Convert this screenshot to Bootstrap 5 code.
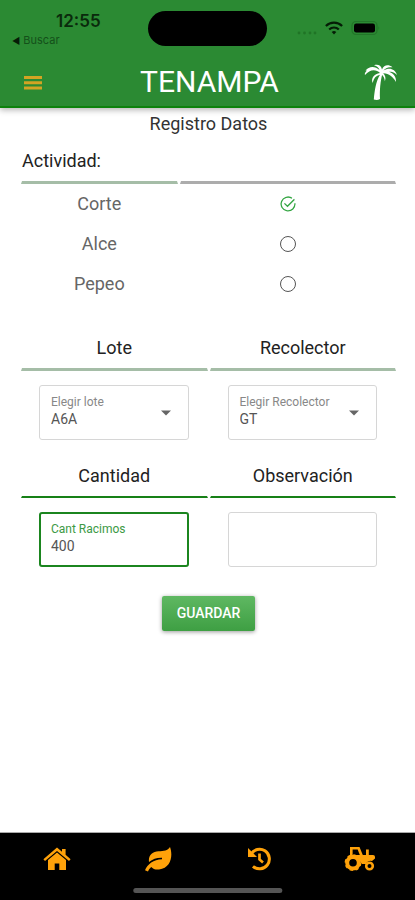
<!DOCTYPE html>
<html lang="es">
<head>
<meta charset="utf-8">
<meta name="viewport" content="width=device-width, initial-scale=1">
<title>Tenampa - Registro Datos</title>
<link href="https://cdn.jsdelivr.net/npm/bootstrap@5.3.0/dist/css/bootstrap.min.css" rel="stylesheet">
<style>
  body { font-family: Roboto, "Liberation Sans", sans-serif; color: #333; background: #fff; }
  .app-top { background: #2b8a33; border-bottom: 2px solid #0c820c; box-shadow: 0 2px 6px rgba(0,0,0,.3); }
  .status { height: 58px; padding-top: 11px; }
  .status-side { width: 148px; }
  .clock { font: 600 17px/20px Inter, sans-serif; color: #0a2a0c; padding-left: 56px; }
  .back-link { font: 400 11px/18px Inter, sans-serif; color: #14501a; padding-left: 12px; }
  .back-link span { color: #061c07; font-size: 9px; }
  .island { height: 35px; background: #000; }
  .status-icons { padding: 8px 35px 0 0; gap: 8px; }
  .bar { height: 48px; padding: 0 16px 0 20px; }
  .brand { font-size: 30px; line-height: 36px; color: #fff; font-weight: 400; }
  .bar-side { width: 36px; }
  .page-title { font-size: 18px; line-height: 24px; font-weight: 400; padding-top: 4px; }
  main { padding: 0 17px 0 19px; }
  .grid-table { width: 100%; border-collapse: separate; border-spacing: 2px 0; table-layout: fixed; }
  .grid-table th { font-weight: 400; font-size: 18px; line-height: 27px; color: #222; vertical-align: bottom; padding: 0 0 7px; border: 1px solid transparent; border-top: 0; border-bottom: 3px solid #a5bda7; }
  .grid-table .line-gray { border-bottom-color: #acacac; }
  .grid-table .line-green { border-bottom: 2px solid #178017; }
  .activity { margin-top: 6px; }
  .activity th { height: 42px; }
  .activity td { height: 40px; font-size: 18px; line-height: 24px; color: #666; text-align: center; vertical-align: middle; }
  .activity .col-name { width: 42%; }
  .entry th { height: 51px; text-align: center; }
  .entry td { padding: 14px 19px 0 18px; }
  .entry .second th { height: 58px; }
  .pick { appearance: none; width: 16px; height: 16px; border: 1px solid #555; border-radius: 50%; display: block; margin: 0 auto; background: #fff; }
  .pick:checked { border: 0; background: url("data:image/svg+xml,%3Csvg xmlns='http://www.w3.org/2000/svg' viewBox='0 0 18 18' fill='none' stroke='%2333a542' stroke-width='1.5'%3E%3Cpath d='M13.5 2.6A7.8 7.8 0 1 0 16.8 8.200M5 8.300l3.400 3.200L16.600 3.400'/%3E%3C/svg%3E") center / 16px no-repeat; }
  .field { height: 55px; border: 1px solid #d6d6d6; border-radius: 3px; padding: 8px 16px 0 11px; }
  .field.active { border: 2px solid #1b851f; padding: 7px 15px 0 10px; }
  .field label { font-size: 12px; line-height: 16px; color: #888; white-space: nowrap; }
  .field.active label { color: #3c9a45; }
  .field select, .field input { display: block; width: 100%; border: 0; padding: 0; outline: 0; appearance: none; background: transparent; font-size: 14px; line-height: 18px; height: 18px; color: #555; }
  .field textarea { display: block; width: 100%; height: 38px; border: 0; padding: 0; outline: 0; resize: none; }
  .caret { margin-bottom: 8px; }
  .save { background: linear-gradient(#5fb862, #3e9f43); border: 0; border-radius: 2px; color: #fff; font-size: 14px; line-height: 20px; font-weight: 500; padding: 7px 15px 8px; margin-top: 29px; box-shadow: 0 1px 4px rgba(0,0,0,.4); }
  .tabs { background: #000; border-top: 1px solid #aaa; padding: 0 5px 0 6px; height: 68px; }
  .tabs a { padding-top: 13px; }
  .home-line { width: 36%; height: 5px; background: #555; bottom: 7px; }
</style>
</head>
<body>
<div class="min-vh-100 d-flex flex-column">
  <header class="app-top">
    <div class="status d-flex">
      <div class="status-side">
        <div class="clock">12:55</div>
        <div class="back-link"><span>◀</span> Buscar</div>
      </div>
      <div class="island rounded-pill flex-grow-1"></div>
      <div class="status-side d-flex justify-content-end align-items-start status-icons">
        <svg width="20" height="16" viewBox="0 0 20 16" fill="#207426"><circle cx="2" cy="14" r="1.400"/><circle cx="7.500" cy="14" r="1.400"/><circle cx="13" cy="14" r="1.400"/><circle cx="18" cy="14" r="1.400"/></svg>
        <svg width="18" height="16" viewBox="0 0 18 16" fill="none" stroke="#051c06" stroke-width="2.200"><path d="M.9 7a11.600 11.600 0 0 1 16.200 0M4.200 10.500a6.800 6.800 0 0 1 9.600 0"/><path d="M6.700 13a3.300 3.300 0 0 1 4.600 0L9 15.400z" fill="#051c06" stroke="none"/></svg>
        <svg width="29" height="16" viewBox="0 0 29 16"><rect x="1" y="2.500" width="25" height="13" rx="4" fill="none" stroke="#237529" stroke-width="1.200"/><rect x="3" y="4.500" width="21" height="9" rx="2.200"/><path d="M27.500 7v4q1.500-2 0-4" fill="#237529"/></svg>
      </div>
    </div>
    <div class="bar d-flex align-items-center justify-content-between">
      <div class="bar-side">
        <button class="btn p-0 border-0 d-block" type="button" aria-label="Menú">
          <svg class="d-block" width="26" height="24" viewBox="0 0 26 24" stroke="#d3a423" stroke-width="3"><path d="M4 7.500h18M4 12.700h18M4 17.900h18"/></svg>
        </button>
      </div>
      <h1 class="brand m-0">TENAMPA</h1>
      <div class="bar-side">
        <svg class="d-block" width="36" height="40" viewBox="0 1 36 40" fill="#fff"><path d="M17 12C13 8 7 8 2 14c-.6-1 .1-3 2-4.500l-1.500.2C6 5 12 5 16.500 9 15.500 6.500 14 5 11 4.200c3.500-1.200 7-.2 8 4.200C21 4 25 3 29.500 6.200l-1.700.1C25 6 22 7.500 20.500 9.500 26 6 32 7.500 34 14c-2.800-2.800-5.200-3.300-8-3.300 4.500 1.700 7.200 4.800 7 10.300-3-5.200-7-8.300-12.500-8.700l-1.300 1.200C17.500 20 16.500 29 17 38c-2 1.200-4.500 1-6.200.4C11.500 30 13 20 17 13.700c-4 .8-6.200 3.300-7.200 8.300-2.300-4.500 1.500-9.200 7.200-10z"/><path d="M20 12c2.200 2 3.200 5 1.900 8.200C21.500 17 20.500 15 18.500 13.500z"/></svg>
      </div>
    </div>
  </header>

  <main>
    <form>
      <h2 class="page-title text-center m-0">Registro Datos</h2>
      <table class="grid-table activity">
        <thead>
          <tr><th class="col-name" scope="col">Actividad:</th><th class="line-gray"></th></tr>
        </thead>
        <tbody>
          <tr><td><label for="corte">Corte</label></td><td><input class="pick" type="radio" name="actividad" id="corte" checked></td></tr>
          <tr><td><label for="alce">Alce</label></td><td><input class="pick" type="radio" name="actividad" id="alce"></td></tr>
          <tr><td><label for="pepeo">Pepeo</label></td><td><input class="pick" type="radio" name="actividad" id="pepeo"></td></tr>
        </tbody>
      </table>

      <table class="grid-table entry mt-3">
        <tbody>
          <tr><th scope="col">Lote</th><th scope="col">Recolector</th></tr>
          <tr>
            <td>
              <div class="field d-flex align-items-center">
                <div class="flex-grow-1 align-self-start">
                  <label class="d-block" for="lote">Elegir lote</label>
                  <select id="lote"><option>A6A</option></select>
                </div>
                <svg class="caret" width="12" height="6" viewBox="0 0 12 6"><path d="M1 .5h10l-5 5z" fill="#666"/></svg>
              </div>
            </td>
            <td>
              <div class="field d-flex align-items-center">
                <div class="flex-grow-1 align-self-start">
                  <label class="d-block" for="recolector">Elegir Recolector</label>
                  <select id="recolector"><option>GT</option></select>
                </div>
                <svg class="caret" width="12" height="6" viewBox="0 0 12 6"><path d="M1 .5h10l-5 5z" fill="#666"/></svg>
              </div>
            </td>
          </tr>
          <tr class="second"><th class="line-green" scope="col">Cantidad</th><th class="line-green" scope="col">Observación</th></tr>
          <tr>
            <td>
              <div class="field active">
                <label class="d-block" for="cantidad">Cant Racimos</label>
                <input id="cantidad" type="text" inputmode="numeric" value="400">
              </div>
            </td>
            <td>
              <div class="field"><textarea id="obs" aria-label="Observación"></textarea></div>
            </td>
          </tr>
        </tbody>
      </table>
      <div class="text-center"><button class="btn save" type="button">GUARDAR</button></div>
    </form>
  </main>

  <nav class="tabs d-flex mt-auto position-relative" aria-label="Principal">
    <a class="col d-flex justify-content-center" href="#" aria-label="Inicio">
      <svg width="28" height="26" viewBox="0 0 28 26" fill="#ffa20a"><path d="M14 1.500l5 4.300V3h3.600v5.800l5 4.400-1.600 1.900L14 5 2 15.100.4 13.200z"/><path d="M14 6.400l9 7.700V24h-6.700v-6.500h-4.600V24H5v-9.900z"/></svg>
    </a>
    <a class="col d-flex justify-content-center" href="#" aria-label="Cultivo">
      <svg width="28" height="26" viewBox="0 0 28 26" fill="#ffa20a"><path d="M26 1c3 8 1.500 21-11 22.500-3.500.4-6-.6-7.800-2.500C5.500 22.500 4.500 24 4 25.500l-3-1.200C3.500 18 9.500 13.600 18 13.200v-1.400c-5-.2-9.300 1.300-13 4.200C4 9.500 8.500 5.500 14.500 5.300 20 5.200 23.500 4.600 26 1z"/></svg>
    </a>
    <a class="col d-flex justify-content-center" href="#" aria-label="Historial">
      <svg width="26" height="26" viewBox="0 0 26 26" fill="none" stroke="#ffa20a" stroke-width="3"><path d="M5 8.200A9.800 9.800 0 1 1 7 20.300"/><path d="M13.500 7.500v6l3.500 3" stroke-width="2.700"/><path d="M2 2v9h9z" fill="#ffa20a" stroke="none"/></svg>
    </a>
    <a class="col d-flex justify-content-center" href="#" aria-label="Maquinaria">
      <svg width="32" height="26" viewBox="0 0 32 26"><path d="M6 1h9.500l3.300 8H22V3.500h2.800V9H29q2 0 2 2v1.500L28 15q-4-.8-6 3h-4l-6-8H6z" fill="#ffa20a"/><path d="M8.600 3.500V9h7.200l-2.100-5.500z"/><circle cx="9" cy="16.700" r="5.800" fill="none" stroke="#ffa20a" stroke-width="4"/><circle cx="9" cy="16.700" r="7.500" fill="none" stroke="#ffa20a" stroke-width="1.800" stroke-dasharray="3.200 2.690"/><circle cx="25.500" cy="20" r="3.300" fill="none" stroke="#ffa20a" stroke-width="2.600"/></svg>
    </a>
    <div class="home-line rounded-pill position-absolute start-50 translate-middle-x"></div>
  </nav>
</div>
<script src="https://cdn.jsdelivr.net/npm/bootstrap@5.3.0/dist/js/bootstrap.bundle.min.js"></script>
</body>
</html>
